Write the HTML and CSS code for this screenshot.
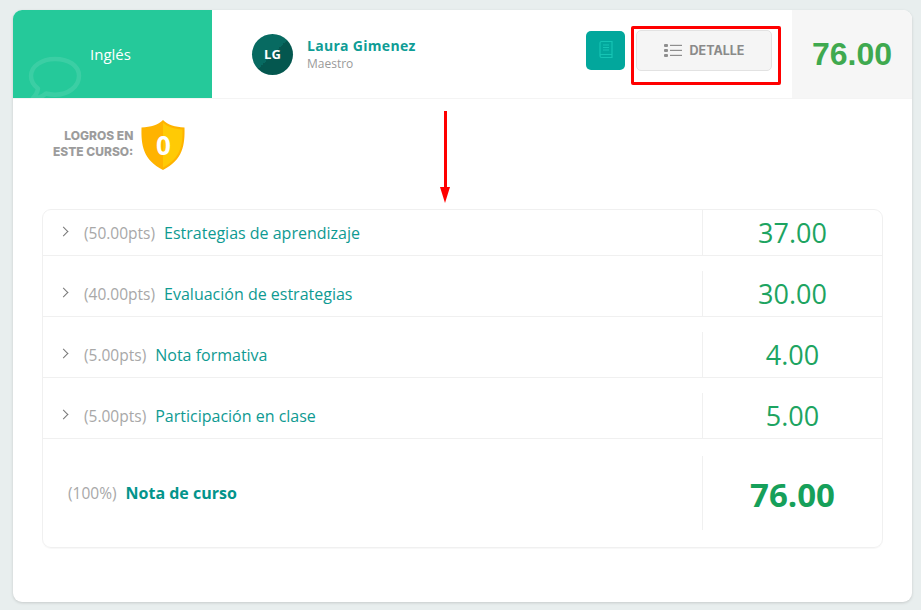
FILE: index.html
```html
<!DOCTYPE html>
<html lang="en">
<head>
  <meta charset="UTF-8">
  <title>Detalle de curso</title>
  <link rel="stylesheet" href="styles.css">
</head>
<body>
  <div class="card">
    <div class="header">
      <div class="course">
        <svg class="course-icon" viewBox="0 0 54 46" width="54" height="46">
          <path d="M27 3C14 3 3 10 3 20c0 5 3 9.500 7 12.500-.5 4-3 7.500-5.500 10 5 0 10-2 13.500-5 3 .8 6 1.200 9 1.200 13 0 24-8 24-18.700S40 3 27 3z" fill="none" stroke="#fff" stroke-opacity=".1" stroke-width="4.500" stroke-linejoin="round"/>
        </svg>
        <span class="course-name">Inglés</span>
      </div>
      <div class="teacher">
        <div class="avatar">LG</div>
        <div>
          <div class="teacher-name">Laura Gimenez</div>
          <div class="teacher-role">Maestro</div>
        </div>
      </div>
      <div class="actions">
        <button class="book-btn">
          <svg viewBox="0 0 16 20" width="16" height="20" fill="none" stroke="#16c4b4" stroke-width="1.200">
            <path d="M2 16V3a1.500 1.500 0 0 1 1.500-1.500h10.500v13H3.500a1.500 1.500 0 0 0 0 3H14v-3"/>
            <path d="M5 5h6M5 7.500h6M5 10h6"/>
          </svg>
        </button>
        <button class="detail-btn">
          <svg viewBox="0 0 18 15" width="18" height="15" fill="#8e8e8e">
            <rect x="0" y="1" width="4" height="3" rx="1"/>
            <rect x="0" y="6" width="4" height="3" rx="1"/>
            <rect x="0" y="11" width="4" height="3" rx="1"/>
            <rect x="6" y="1.800" width="12" height="1.200"/>
            <rect x="6" y="6.800" width="12" height="1.200"/>
            <rect x="6" y="11.800" width="12" height="1.200"/>
          </svg>
          DETALLE
        </button>
      </div>
      <div class="score">76.00</div>
    </div>

    <div class="achievements">
      <div class="achievements-label">LOGROS EN<br>ESTE CURSO:</div>
      <div class="shield">
        <svg viewBox="0 0 44 50" width="44" height="50">
          <path d="M22 0c5 5 12 7 21.500 7.500C44 25 42 40 22 50 2 40 0 25 .5 7.500 10 7 17 5 22 0z" fill="#ffb300"/>
          <path d="M22 2.500V47.500c18-9.500 19.800-23 19.500-38C33 9 26.500 7 22 2.500z" fill="#ffca05"/>
        </svg>
        <span class="shield-count">0</span>
      </div>
    </div>

    <div class="grades">
      <div class="row row-first">
        <div class="row-main">
          <span class="chevron"></span>
          <span class="pts">(50.00pts)</span>
          <span class="row-title">Estrategias de aprendizaje</span>
        </div>
        <div class="row-value">37.00</div>
      </div>
      <div class="row">
        <div class="row-main">
          <span class="chevron"></span>
          <span class="pts">(40.00pts)</span>
          <span class="row-title">Evaluación de estrategias</span>
        </div>
        <div class="row-value">30.00</div>
      </div>
      <div class="row">
        <div class="row-main">
          <span class="chevron"></span>
          <span class="pts">(5.00pts)</span>
          <span class="row-title">Nota formativa</span>
        </div>
        <div class="row-value">4.00</div>
      </div>
      <div class="row">
        <div class="row-main">
          <span class="chevron"></span>
          <span class="pts">(5.00pts)</span>
          <span class="row-title">Participación en clase</span>
        </div>
        <div class="row-value">5.00</div>
      </div>
      <div class="total">
        <div class="total-main">
          <span class="pts">(100%)</span>
          <span class="total-title">Nota de curso</span>
        </div>
        <div class="total-value">76.00</div>
      </div>
    </div>
  </div>

  <!-- red annotations over the screenshot -->
  <div class="mark-box"></div>
  <div class="mark-line"></div>
  <div class="mark-head"></div>
</body>
</html>
```

FILE: styles.css
```css
* {
  box-sizing: border-box;
}

body {
  margin: 0;
  height: 610px;
  padding: 10px 9px 8px 13px;
  background: #e8eeee;
  font-family: "Open Sans", sans-serif;
  color: #333;
  overflow: hidden;
}

.card {
  height: 592px;
  background: #fff;
  border-radius: 9px;
  box-shadow: 0 1px 3px rgba(0,0,0,0.15);
  overflow: hidden;
}

.header {
  display: flex;
  height: 89px;
  border-bottom: 1px solid #f4f4f4;
}

.course {
  position: relative;
  width: 199px;
  padding: 33px 0 0 77px;
  background: #25c99a;
  color: #fff;
  font-size: 15px;
  line-height: 22px;
}

.course-icon {
  position: absolute;
  left: 15px;
  top: 46px;
}

.teacher {
  display: flex;
  align-items: center;
  flex: 1;
  gap: 14px;
  padding: 0 0 0 40px;
}

.avatar {
  display: flex;
  align-items: center;
  justify-content: center;
  width: 41px;
  height: 41px;
  border-radius: 50%;
  background: linear-gradient(135deg, #076a61 50%, #04574f 50%);
  color: #fff;
  font-size: 13px;
  font-weight: 700;
}

.teacher-name {
  color: #0f9d96;
  font-size: 14px;
  font-weight: 700;
  line-height: 20px;
  letter-spacing: 0.3px;
}

.teacher-role {
  color: #9a9a9a;
  font-size: 12px;
  line-height: 16px;
}

.actions {
  display: flex;
  align-items: center;
  gap: 11px;
  padding: 0 20px 8px 0;
}

.book-btn {
  display: flex;
  align-items: center;
  justify-content: center;
  width: 39px;
  height: 39px;
  padding: 0;
  border: none;
  border-radius: 5px;
  background: #02a79c;
}

.detail-btn {
  display: flex;
  align-items: center;
  justify-content: center;
  gap: 8px;
  width: 136px;
  height: 41px;
  padding: 0;
  border: 1px solid #e2e2e2;
  border-radius: 5px;
  background: #f5f5f5;
  color: #8a8a8a;
  font-family: "Inter", sans-serif;
  font-size: 12.500px;
  font-weight: 700;
}

.score {
  width: 120px;
  padding-bottom: 2px;
  background: #f6f6f6;
  color: #3fa94f;
  font-family: "Liberation Sans", sans-serif;
  font-size: 32px;
  font-weight: 700;
  line-height: 88px;
  text-align: center;
}

.achievements {
  display: flex;
  height: 110px;
  padding: 21px 0 0 40px;
  gap: 8px;
}

.achievements-label {
  padding-top: 8px;
  color: #9c9c9c;
  font-family: "Inter", sans-serif;
  font-size: 12px;
  font-weight: 800;
  line-height: 16px;
  text-align: right;
}

.shield {
  position: relative;
  width: 44px;
  height: 50px;
}

.shield-count {
  position: absolute;
  left: 0;
  right: 0;
  top: 5px;
  color: #fff;
  font-size: 26px;
  font-weight: 700;
  line-height: 40px;
  text-align: center;
}

.grades {
  height: 339px;
  margin: 0 29px;
  border: 1px solid #f0f0f0;
  border-radius: 9px;
  box-shadow: 0 1px 1px rgba(0,0,0,0.03);
}

.row {
  display: flex;
  height: 61px;
  padding-top: 15px;
  border-bottom: 1px solid #f0f0f0;
}

.row-first {
  height: 46px;
  padding-top: 0;
}

.row-main {
  display: flex;
  align-items: center;
  flex: 1;
  height: 45px;
  padding: 0 0 0 17px;
  margin-top: -0px;
}

.row:not(.row-first) .row-main {
  padding-bottom: 0;
}

.chevron {
  width: 7px;
  height: 7px;
  margin: -3px 17px 0 0;
  border-top: 1.500px solid #777;
  border-right: 1.500px solid #777;
  transform: rotate(45deg);
}

.pts {
  color: #a8a8a8;
  font-size: 15.500px;
  margin-right: 9px;
}

.row-title {
  color: #0e9a92;
  font-size: 16px;
}

.row-value {
  width: 180px;
  border-left: 1px solid #f0f0f0;
  color: #1da461;
  font-size: 27px;
  line-height: 46px;
  text-align: center;
}

.total {
  display: flex;
  height: 107px;
  padding: 17px 0 16px;
}

.total-main {
  display: flex;
  align-items: center;
  flex: 1;
  padding: 0 0 0 25px;
}

.total-title {
  color: #03948b;
  font-size: 16px;
  font-weight: 700;
}

.total .pts {
  margin-right: 9px;
  font-size: 15.500px;
}

.total-value {
  width: 180px;
  border-left: 1px solid #f0f0f0;
  color: #16a05a;
  font-size: 33px;
  font-weight: 700;
  line-height: 77px;
  text-align: center;
}

.mark-box {
  position: absolute;
  left: 631px;
  top: 26px;
  width: 150px;
  height: 59px;
  border: 3px solid #f00;
  border-radius: 2px;
}

.mark-line {
  position: absolute;
  left: 444px;
  top: 111px;
  width: 3px;
  height: 78px;
  background: #f00;
}

.mark-head {
  position: absolute;
  left: 440px;
  top: 187px;
  border-top: 16px solid #f00;
  border-left: 5px solid transparent;
  border-right: 5px solid transparent;
}
```
